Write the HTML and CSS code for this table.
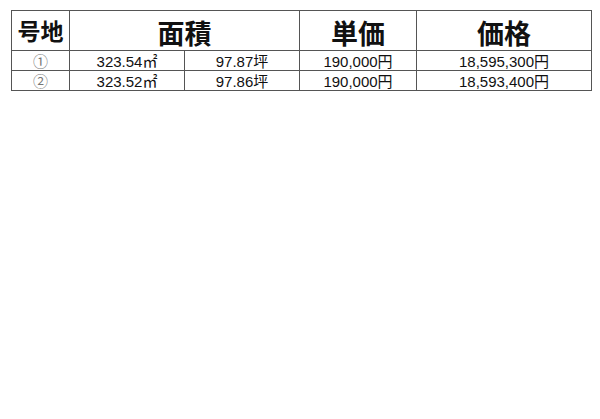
FILE: index.html
```html
<!DOCTYPE html>
<html lang="ja">
<head>
<meta charset="utf-8">
<link rel="stylesheet" href="styles.css">
</head>
<body>
<table class="price-table">
  <colgroup>
    <col class="c-no">
    <col class="c-area">
    <col class="c-tsubo">
    <col class="c-unit">
    <col class="c-price">
  </colgroup>
  <thead>
    <tr>
      <th class="h-small"><div class="cell">号地</div></th>
      <th colspan="2"><div class="cell">面積</div></th>
      <th><div class="cell">単価</div></th>
      <th><div class="cell">価格</div></th>
    </tr>
  </thead>
  <tbody>
    <tr>
      <td class="num"><div class="cell">①</div></td>
      <td><div class="cell">323.54㎡</div></td>
      <td><div class="cell">97.87坪</div></td>
      <td><div class="cell">190,000円</div></td>
      <td><div class="cell">18,595,300円</div></td>
    </tr>
    <tr>
      <td class="num"><div class="cell">②</div></td>
      <td><div class="cell">323.52㎡</div></td>
      <td><div class="cell">97.86坪</div></td>
      <td><div class="cell">190,000円</div></td>
      <td><div class="cell">18,593,400円</div></td>
    </tr>
  </tbody>
</table>
</body>
</html>
```
FILE: styles.css
```css
html, body {
  margin: 0;
  background: #fff;
}
body {
  padding: 10px 0 0 11px;
  font-family: "Liberation Sans", "Noto Sans CJK JP", sans-serif;
  color: #111;
}
.price-table {
  border-collapse: collapse;
  table-layout: fixed;
  width: 580px;
}
.c-no { width: 58px; }
.c-area { width: 115px; }
.c-tsubo { width: 115px; }
.c-unit { width: 117px; }
.c-price { width: 175px; }
.price-table th,
.price-table td {
  border: 1px solid #555;
  padding: 0;
  text-align: center;
  white-space: nowrap;
}
.cell {
  display: flex;
  align-items: center;
  justify-content: center;
}
.price-table th .cell {
  height: 39px;
  font-family: "Noto Sans CJK JP", sans-serif;
  font-weight: 700;
  font-size: 27px;
  line-height: 1;
  padding-top: 3px;
  box-sizing: border-box;
}
.price-table th.h-small .cell {
  font-size: 23px;
  padding-top: 0;
}
.price-table td .cell {
  height: 19px;
  font-size: 15px;
  line-height: 1;
  padding-top: 2px;
  box-sizing: border-box;
}
.price-table td.num .cell {
  font-family: "Noto Sans CJK JP", sans-serif;
  color: #777;
  font-size: 15px;
  padding-top: 0;
}
```
